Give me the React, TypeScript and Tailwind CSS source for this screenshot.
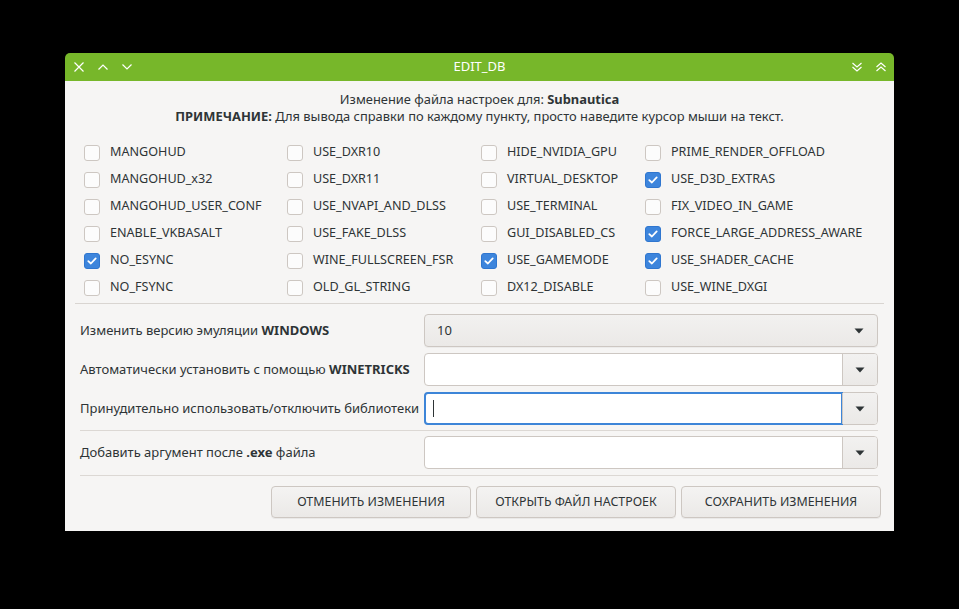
import React from "react";

const FONT = { fontFamily: '"Noto Sans", "Open Sans", sans-serif' };

const columns: [string, boolean][][] = [
  [
    ["MANGOHUD", false],
    ["MANGOHUD_x32", false],
    ["MANGOHUD_USER_CONF", false],
    ["ENABLE_VKBASALT", false],
    ["NO_ESYNC", true],
    ["NO_FSYNC", false],
  ],
  [
    ["USE_DXR10", false],
    ["USE_DXR11", false],
    ["USE_NVAPI_AND_DLSS", false],
    ["USE_FAKE_DLSS", false],
    ["WINE_FULLSCREEN_FSR", false],
    ["OLD_GL_STRING", false],
  ],
  [
    ["HIDE_NVIDIA_GPU", false],
    ["VIRTUAL_DESKTOP", false],
    ["USE_TERMINAL", false],
    ["GUI_DISABLED_CS", false],
    ["USE_GAMEMODE", true],
    ["DX12_DISABLE", false],
  ],
  [
    ["PRIME_RENDER_OFFLOAD", false],
    ["USE_D3D_EXTRAS", true],
    ["FIX_VIDEO_IN_GAME", false],
    ["FORCE_LARGE_ADDRESS_AWARE", true],
    ["USE_SHADER_CACHE", true],
    ["USE_WINE_DXGI", false],
  ],
];

const colWidths = ["w-[203px]", "w-[194px]", "w-[164px]", "flex-1"];

function Check({ label, checked }: { label: string; checked: boolean }) {
  return (
    <div className="flex h-[27px] items-center">
      {checked ? (
        <span className="flex h-4 w-4 flex-none items-center justify-center rounded-[3px] border border-[#2f76cf] bg-[#3d85dc]">
          <svg width="10" height="8" viewBox="0 0 10 8" fill="none">
            <path d="M1.3 4.1 L3.9 6.5 L8.7 1.4" stroke="white" strokeWidth="1.8" strokeLinecap="round" strokeLinejoin="round" />
          </svg>
        </span>
      ) : (
        <span className="h-4 w-4 flex-none rounded-[3px] border border-[#cdc7c2] bg-[#fcfcfc]"></span>
      )}
      <span className="ml-[10px] whitespace-nowrap text-[12.6px]">{label}</span>
    </div>
  );
}

function Arrow() {
  return (
    <svg width="10" height="6" viewBox="0 0 10 6">
      <path d="M0.5 0.5 L9.5 0.5 L5 5.5 Z" fill="#2e3436" />
    </svg>
  );
}

function EntryCombo({ focused }: { focused?: boolean }) {
  return (
    <div className="flex h-[33px] w-[454px] rounded-[4px] border border-[#cdc7c2] bg-white">
      <div
        className={
          focused
            ? "-m-px flex flex-1 items-center rounded-l-[4px] border-2 border-[#3d85d8] pl-[7px]"
            : "flex flex-1 items-center"
        }
      >
        {focused && <span className="h-[17px] w-px bg-[#2e3436]"></span>}
      </div>
      <div className="flex w-[35px] items-center justify-center rounded-r-[3px] border-l border-[#cdc7c2] bg-gradient-to-b from-[#f2f1f0] to-[#ebe9e7]">
        <Arrow />
      </div>
    </div>
  );
}

export default function App() {
  return (
    <div className="h-[609px] w-[959px] overflow-hidden bg-black pl-[65px] pt-[53px] text-[13px] text-[#2e3436]" style={FONT}>
      <div className="flex h-[478px] w-[829px] flex-col">
        {/* title bar */}
        <div className="flex h-[28px] flex-none items-center rounded-t-[5px] bg-[#77b72a] text-white">
          <div className="flex w-[120px] items-center gap-[14px] pl-[9px]">
            <svg width="10" height="10" viewBox="0 0 10 10" fill="none" stroke="white" strokeWidth="1.2">
              <path d="M0.5 0.5 L9.5 9.5 M9.5 0.5 L0.5 9.5" />
            </svg>
            <svg width="10" height="6" viewBox="0 0 10 6" fill="none" stroke="white" strokeWidth="1.2">
              <path d="M0.5 5.5 L5 1 L9.5 5.5" />
            </svg>
            <svg width="10" height="6" viewBox="0 0 10 6" fill="none" stroke="white" strokeWidth="1.2">
              <path d="M0.5 0.5 L5 5 L9.5 0.5" />
            </svg>
          </div>
          <div className="flex-1 text-center text-[13px]">EDIT_DB</div>
          <div className="flex w-[120px] items-center justify-end gap-[14px] pr-[8px]">
            <svg width="10" height="10" viewBox="0 0 10 10" fill="none" stroke="white" strokeWidth="1.2">
              <path d="M0.5 1 L5 5 L9.5 1 M0.5 5 L5 9 L9.5 5" />
            </svg>
            <svg width="10" height="10" viewBox="0 0 10 10" fill="none" stroke="white" strokeWidth="1.2">
              <path d="M0.5 5 L5 1 L9.5 5 M0.5 9 L5 5 L9.5 9" />
            </svg>
          </div>
        </div>

        {/* body */}
        <div className="flex flex-1 flex-col bg-[#f6f5f4] px-[10px]">
          <div className="pt-[10px] text-center text-[12.9px] leading-[17px]">
            <div>
              Изменение файла настроек для: <b className="font-bold">Subnautica</b>
            </div>
            <div>
              <b className="font-bold">ПРИМЕЧАНИЕ:</b> Для вывода справки по каждому пункту, просто наведите курсор мыши на текст.
            </div>
          </div>

          <div className="mt-[14px] flex pl-[9px]">
            {columns.map((col, i) => (
              <div key={i} className={colWidths[i]}>
                {col.map(([label, checked]) => (
                  <Check key={label} label={label} checked={checked} />
                ))}
              </div>
            ))}
          </div>

          <div className="mt-[2px] h-px bg-[#d9d5d1]"></div>

          <div className="flex flex-col pl-[5px] pr-[6px]">
            <div className="mt-[10px] flex items-center">
              <div className="flex-1">
                Изменить версию эмуляции <b className="font-bold">WINDOWS</b>
              </div>
              <div className="flex h-[33px] w-[454px] items-center justify-between rounded-[4px] border border-[#cdc7c2] bg-gradient-to-b from-[#f2f1f0] to-[#ebe9e7] pl-[12px] pr-[13px] shadow-[0_1px_0_rgba(0,0,0,0.04)]">
                <span>10</span>
                <Arrow />
              </div>
            </div>
            <div className="mt-[6px] flex items-center">
              <div className="flex-1">
                Автоматически установить с помощью <b className="font-bold">WINETRICKS</b>
              </div>
              <EntryCombo />
            </div>
            <div className="mt-[6px] flex items-center">
              <div className="flex-1 whitespace-nowrap">Принудительно использовать/отключить библиотеки</div>
              <EntryCombo focused />
            </div>
            <div className="mt-[5px] h-px bg-[#dcd8d4]"></div>
            <div className="mt-[5px] flex items-center">
              <div className="flex-1">
                Добавить аргумент после <b className="font-bold">.exe</b> файла
              </div>
              <EntryCombo />
            </div>
            <div className="mt-[6px] h-px bg-[#dcd8d4]"></div>
          </div>

          <div className="mt-[10px] flex justify-end gap-[5px] pr-[3px]">
            {["ОТМЕНИТЬ ИЗМЕНЕНИЯ", "ОТКРЫТЬ ФАЙЛ НАСТРОЕК", "СОХРАНИТЬ ИЗМЕНЕНИЯ"].map((t) => (
              <div
                key={t}
                className="flex h-[32px] w-[200px] items-center justify-center rounded-[4px] border border-[#cdc7c2] bg-gradient-to-b from-[#f4f3f2] to-[#ebe9e7] text-[12.4px] shadow-[0_1px_0_rgba(0,0,0,0.05)]"
              >
                {t}
              </div>
            ))}
          </div>
        </div>
      </div>
    </div>
  );
}
